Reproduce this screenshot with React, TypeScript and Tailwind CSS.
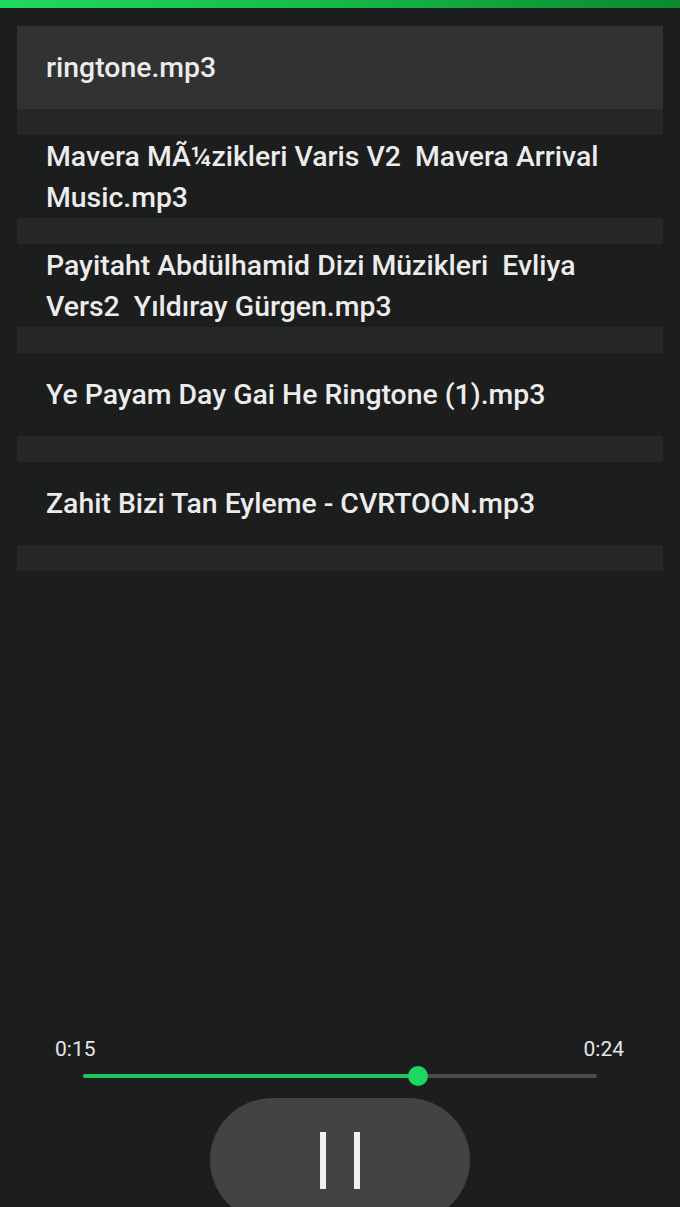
import React from "react";

const items = [
  { text: "ringtone.mp3", active: true },
  { text: "Mavera MÃ¼zikleri Varis V2  Mavera Arrival Music.mp3", active: false },
  { text: "Payitaht Abdülhamid Dizi Müzikleri  Evliya Vers2  Yıldıray Gürgen.mp3", active: false },
  { text: "Ye Payam Day Gai He Ringtone (1).mp3", active: false },
  { text: "Zahit Bizi Tan Eyleme - CVRTOON.mp3", active: false },
];

export default function App() {
  return (
    <div
      className="h-[1207px] w-[680px] overflow-hidden bg-[#1c1d1d] flex flex-col"
      style={{ fontFamily: "Roboto, 'Noto Sans', sans-serif" }}
    >
      <div className="h-[8px] bg-gradient-to-r from-[#20d862] via-[#16b84a] to-[#0b8a2c]" />
      <div className="px-[17px] pt-[18px] flex flex-col">
        {items.map((it, i) => (
          <div key={i} className="flex flex-col">
            <div
              className={`h-[83px] flex items-center pl-[29px] pr-[40px] ${
                it.active ? "bg-[#313232]" : ""
              }`}
            >
              <span className="text-[28.4px] font-medium leading-[41px] text-[#ececec] whitespace-pre-wrap">
                {it.text}
              </span>
            </div>
            <div className="h-[26px] bg-[#262727]" />
          </div>
        ))}
      </div>
      <div className="mt-auto flex flex-col">
        <div className="flex justify-between pl-[55px] pr-[56px] text-[21px] leading-[24px] text-[#e6e6e6]">
          <span>0:15</span>
          <span>0:24</span>
        </div>
        <div className="mt-[5px] ml-[83px] w-[514px] h-[20px] relative flex items-center">
          <div className="h-[4px] w-full bg-[#4a4b4b] rounded-full" />
          <div className="absolute left-0 top-[8px] h-[4px] w-[335px] bg-[#22c55e] rounded-l-full" />
          <div className="absolute left-[325px] top-0 h-[20px] w-[20px] rounded-full bg-[#1ed760]" />
        </div>
        <div className="mt-[12px] h-[109px] overflow-hidden flex justify-center">
          <div className="w-[260px] h-[124px] shrink-0 rounded-full bg-[#424343] flex items-center justify-center gap-[28px]">
            <div className="w-[6px] h-[57px] bg-[#f0f0f0]" />
            <div className="w-[6px] h-[57px] bg-[#f0f0f0]" />
          </div>
        </div>
      </div>
    </div>
  );
}
